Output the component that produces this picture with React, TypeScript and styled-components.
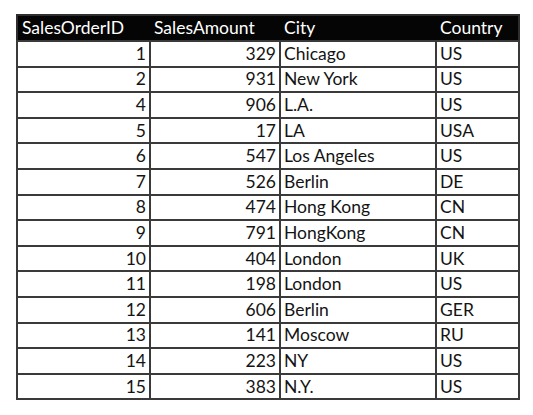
import React from "react";
import styled, { createGlobalStyle } from "styled-components";

const Global = createGlobalStyle`
  html, body { margin: 0; padding: 0; background: #ffffff; }
  body { font-family: Lato, "Open Sans", "Liberation Sans", sans-serif; }
`;

const Page = styled.div`
  width: 533px;
  height: 415px;
  padding: 14px 0 0 16px;
  box-sizing: border-box;
  background: #fff;
`;

const Table = styled.table`
  border-collapse: collapse;
  table-layout: fixed;
  width: 502px;
  border: 2px solid #2e2e2e;
  font-size: 17.5px;
  color: #141414;
`;

const Col = styled.col<{ $w: number }>`
  width: ${(p) => p.$w}px;
`;

const HeadCell = styled.th`
  height: 24px;
  background: #050505;
  color: #ffffff;
  font-weight: 400;
  text-align: left;
  padding: 0 0 0 4px;
  line-height: 24px;
  border: none;
  white-space: nowrap;
  overflow: hidden;
`;

const Row = styled.tr`
  height: 25.6px;
`;

const Cell = styled.td<{ $num?: boolean }>`
  border: 2px solid #3a3a3a;
  padding: ${(p) => (p.$num ? "0 3px 0 0" : "0 0 0 3px")};
  text-align: ${(p) => (p.$num ? "right" : "left")};
  line-height: 22px;
  white-space: nowrap;
  overflow: hidden;
`;

const rows: [number, number, string, string][] = [
  [1, 329, "Chicago", "US"],
  [2, 931, "New York", "US"],
  [4, 906, "L.A.", "US"],
  [5, 17, "LA", "USA"],
  [6, 547, "Los Angeles", "US"],
  [7, 526, "Berlin", "DE"],
  [8, 474, "Hong Kong", "CN"],
  [9, 791, "HongKong", "CN"],
  [10, 404, "London", "UK"],
  [11, 198, "London", "US"],
  [12, 606, "Berlin", "GER"],
  [13, 141, "Moscow", "RU"],
  [14, 223, "NY", "US"],
  [15, 383, "N.Y.", "US"],
];

export default function App() {
  return (
    <>
      <Global />
      <Page>
        <Table>
          <colgroup>
            <Col $w={133} />
            <Col $w={130} />
            <Col $w={156} />
            <Col $w={83} />
          </colgroup>
          <thead>
            <tr>
              <HeadCell>SalesOrderID</HeadCell>
              <HeadCell>SalesAmount</HeadCell>
              <HeadCell>City</HeadCell>
              <HeadCell>Country</HeadCell>
            </tr>
          </thead>
          <tbody>
            {rows.map(([id, amt, city, country]) => (
              <Row key={id}>
                <Cell $num>{id}</Cell>
                <Cell $num>{amt}</Cell>
                <Cell>{city}</Cell>
                <Cell>{country}</Cell>
              </Row>
            ))}
          </tbody>
        </Table>
      </Page>
    </>
  );
}
